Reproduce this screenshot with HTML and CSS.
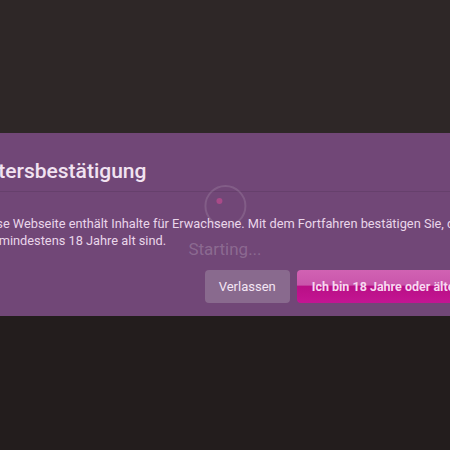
FILE: index.html
```html
<!DOCTYPE html>
<html lang="de">
<head>
    <meta charset="UTF-8">
    <title>Altersbestätigung</title>
    <link rel="stylesheet" href="styles.css">
</head>
<body>
    <div class="page">
        <div class="top-area"></div>
        <div class="dialog-row">
            <div class="dialog">
                <div class="dialog-header">
                    <h2>Altersbestätigung</h2>
                </div>
                <div class="dialog-body">
                    <p>Diese Webseite enthält Inhalte für Erwachsene. Mit dem Fortfahren bestätigen Sie, dass Sie mindestens 18 Jahre alt sind.</p>
                </div>
                <div class="dialog-footer">
                    <button class="btn btn-leave">Verlassen</button>
                    <button class="btn btn-confirm">Ich bin 18 Jahre oder älter</button>
                </div>
            </div>
            <div class="loader">
                <div class="spinner"><span class="dot"></span></div>
                <div class="loader-text">Starting...</div>
            </div>
        </div>
        <div class="bottom-area"></div>
    </div>
</body>
</html>
```

FILE: styles.css
```css
body {
    margin: 0;
    font-family: Roboto, "Liberation Sans", sans-serif;
    background-color: #2e2727;
    overflow: hidden;
}
.page {
    height: 450px;
    display: flex;
    flex-direction: column;
}
.top-area {
    height: 133px;
    background-color: #2e2727;
}
.bottom-area {
    flex: 1;
    background-color: #231d1d;
}
.dialog-row {
    position: relative;
    display: flex;
}
.dialog {
    flex: none;
    width: 575px;
    height: 183px;
    margin-left: -45px;
    background-color: #714777;
    box-sizing: border-box;
}
.dialog-header {
    padding: 25px 24px 0 24px;
    height: 59px;
    box-sizing: border-box;
    border-bottom: 1px solid #66406c;
}
.dialog-header h2 {
    margin: 0;
    font-size: 21px;
    font-weight: 500;
    line-height: 26px;
    color: #f1e3f1;
}
.dialog-body {
    padding: 23px 46px 0 23px;
}
.dialog-body p {
    margin: 0;
    font-size: 12.8px;
    line-height: 17px;
    color: #ead6ea;
}
.dialog-footer {
    display: flex;
    justify-content: flex-end;
    gap: 7px;
    padding: 21px 56px 0 24px;
}
.btn {
    height: 33px;
    border: none;
    border-radius: 4px;
    font-family: Roboto, "Liberation Sans", sans-serif;
    font-size: 13px;
    color: #f4e6f4;
    padding: 0 14px;
}
.btn-leave {
    background-color: #896a8e;
}
.btn-confirm {
    font-size: 12.5px;
    font-weight: bold;
    color: #f7d8f0;
    background: linear-gradient(#d162b3 0%, #c956ab 45%, #b90f86 50%, #c41593 100%);
    padding: 0 15px;
}
.loader {
    position: absolute;
    left: 225px;
    top: 52px;
    transform: translateX(-50%);
    display: flex;
    flex-direction: column;
    align-items: center;
}
.spinner {
    position: relative;
    width: 42px;
    height: 42px;
    border: 2px solid rgba(255, 255, 255, 0.12);
    border-radius: 50%;
    box-sizing: border-box;
}
.dot {
    position: absolute;
    left: 10px;
    top: 11px;
    width: 6px;
    height: 6px;
    border-radius: 50%;
    background-color: #a94a88;
}
.loader-text {
    margin-top: 12px;
    font-size: 17px;
    color: rgba(255, 255, 255, 0.2);
}
```
